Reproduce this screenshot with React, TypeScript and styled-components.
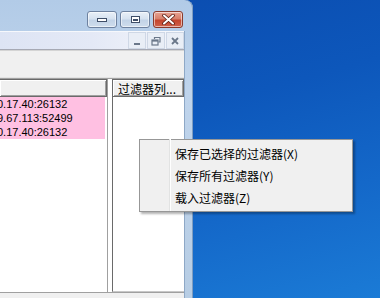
import React from 'react';
import styled, { createGlobalStyle } from 'styled-components';

const GlobalStyle = createGlobalStyle`
  html, body {
    margin: 0;
    padding: 0;
    width: 380px;
    height: 298px;
    overflow: hidden;
  }
  body {
    font-family: "Liberation Sans", Arial, "Noto Sans CJK SC", sans-serif;
  }
`;

const Screen = styled.div`
  position: relative;
  width: 380px;
  height: 298px;
  display: flex;
  background: linear-gradient(165deg, #0a4aad 0%, #0d57bb 40%, #1468c9 70%, #1b7bd6 100%);
  overflow: hidden;
`;

const Window = styled.div`
  width: 193px;
  height: 298px;
  display: flex;
  flex-direction: column;
  background: linear-gradient(180deg, #b2cbe7 0%, #bfd4ec 30%, #b7cde4 100%);
  border-top-right-radius: 8px;
  box-shadow: inset -1px 0 0 #7f9dc0;
`;

const TitleBar = styled.div`
  height: 31px;
  flex: none;
  display: flex;
  justify-content: flex-end;
  align-items: flex-start;
  gap: 3px;
  padding: 11px 10px 0 0;
  box-sizing: border-box;
`;

const CaptionButton = styled.div<{ $close?: boolean }>`
  width: 30px;
  height: 17px;
  box-sizing: border-box;
  border: 1px solid ${p => (p.$close ? '#8a3a2c' : '#6e82a0')};
  border-radius: 3px;
  display: flex;
  align-items: center;
  justify-content: center;
  background: ${p =>
    p.$close
      ? 'linear-gradient(180deg, #e7a393 0%, #d8806b 45%, #c4452d 55%, #d0614a 100%)'
      : 'linear-gradient(180deg, #e9f0f8 0%, #d6e2f0 45%, #c2d3e7 55%, #cfdded 100%)'};
  box-shadow: inset 0 0 0 1px rgba(255, 255, 255, 0.55);
`;

const Client = styled.div`
  flex: 1;
  display: flex;
  flex-direction: column;
  width: 185px;
  background: #f0f0f0;
  border-right: 1px solid #8ea8c6;
  box-sizing: border-box;
`;

const MdiBar = styled.div`
  height: 19px;
  flex: none;
  display: flex;
  justify-content: flex-end;
  align-items: stretch;
  gap: 1px;
  background: linear-gradient(90deg, #dde4f4 0%, #e4e9f6 50%, #f4f6fb 100%);
  border-top: 1px solid #f6f8fc;
  border-bottom: 1px solid #a6a9b4;
  box-sizing: border-box;
`;

const MdiButton = styled.div`
  width: 18px;
  display: flex;
  align-items: center;
  justify-content: center;
  background: #e9eef6;
  border: 1px solid #cfd8e6;
  box-sizing: border-box;
`;

const ToolBar = styled.div`
  height: 29px;
  flex: none;
  background: #f0f0f0;
  border-top: 1px solid #d4d4d4;
  border-bottom: 1px solid #a0a0a0;
  box-shadow: inset 0 -1px 0 #e3e3e3;
  box-sizing: border-box;
`;

const Panes = styled.div`
  flex: 1;
  display: flex;
  background: #f0f0f0;
`;

const ListPane = styled.div`
  width: 108px;
  flex: none;
  display: flex;
  flex-direction: column;
  background: #ffffff;
  border-right: 1px solid #a0a0a0;
  box-sizing: border-box;
  overflow: hidden;
`;

const ColumnHeader = styled.div<{ $indent?: number }>`
  height: 18px;
  flex: none;
  display: flex;
  align-items: center;
  background: #f0f0f0;
  border-top: 1px solid #6a6a6a;
  border-bottom: 1px solid #6a6a6a;
  border-right: 1px solid #6a6a6a;
  box-shadow: inset 1px 1px 0 #ffffff, inset -1px -1px 0 #a0a0a0;
  box-sizing: border-box;
  padding-left: ${p => p.$indent ?? 0}px;
  font-family: "Noto Sans CJK SC", sans-serif;
  font-size: 12px;
  color: #000;
  white-space: nowrap;
`;

const Row = styled.div`
  height: 14px;
  flex: none;
  display: flex;
  align-items: center;
  background: #ffc0e2;
  margin-right: 2px;
  font-family: "Liberation Sans", Arial, sans-serif;
  font-size: 11px;
  color: #000;
  white-space: nowrap;
`;

const RowText = styled.span`
  margin-left: -3px;
`;

const Splitter = styled.div`
  width: 4px;
  flex: none;
  background: #ffffff;
`;

const FilterPane = styled.div`
  flex: 1;
  display: flex;
  flex-direction: column;
  background: #ffffff;
  border-left: 1px solid #6a6a6a;
  border-bottom: 1px solid #c8c8c8;
`;

const StatusBar = styled.div`
  height: 5px;
  flex: none;
  background: #f0f0f0;
  border-top: 1px solid #a0a0a0;
`;

const ContextMenu = styled.div`
  position: absolute;
  left: 139px;
  top: 139px;
  width: 214px;
  padding: 2px 2px 3px 2px;
  box-sizing: border-box;
  background: #f0f0f0;
  border: 1px solid #979797;
  box-shadow: 2px 2px 2px rgba(0, 0, 0, 0.3);
  display: flex;
  flex-direction: column;
`;

const MenuItem = styled.div`
  position: relative;
  height: 22px;
  display: flex;
  align-items: center;
  padding-left: 33px;
  font-family: "Noto Sans CJK SC", sans-serif;
  font-size: 12px;
  color: #000;
  white-space: nowrap;
  &::before {
    content: '';
    position: absolute;
    left: 27px;
    top: -3px;
    bottom: -3px;
    width: 1px;
    background: #e2e3e3;
    box-shadow: 1px 0 0 #ffffff;
  }
`;

const MinGlyph = () => (
  <svg width="12" height="6" viewBox="0 0 12 6">
    <rect x="1.5" y="1.5" width="9" height="3" fill="#ffffff" stroke="#3e4e68" strokeWidth="1" />
  </svg>
);

const MaxGlyph = () => (
  <svg width="11" height="9" viewBox="0 0 11 9">
    <rect x="1" y="1" width="9" height="7" fill="#3e4e68" />
    <rect x="2" y="2" width="7" height="5" fill="#ffffff" />
    <rect x="3" y="4" width="5" height="2" fill="#3e4e68" />
  </svg>
);

const CloseGlyph = () => (
  <svg width="13" height="11" viewBox="0 0 13 11">
    <path d="M2 1.5 L11 9.5 M11 1.5 L2 9.5" stroke="#5a1c12" strokeWidth="3.6" strokeLinecap="round" />
    <path d="M2 1.5 L11 9.5 M11 1.5 L2 9.5" stroke="#ffffff" strokeWidth="2" strokeLinecap="round" />
  </svg>
);

const MdiMin = () => (
  <svg width="10" height="10" viewBox="0 0 10 10">
    <rect x="2" y="7" width="6" height="2" fill="#6a7789" />
  </svg>
);

const MdiRestore = () => (
  <svg width="10" height="10" viewBox="0 0 10 10">
    <path d="M3.5 3 V1.5 H9 V6 H7.5" fill="none" stroke="#6a7789" strokeWidth="1.2" />
    <rect x="1" y="4" width="6" height="5" fill="none" stroke="#6a7789" strokeWidth="1.2" />
    <rect x="1" y="4" width="6" height="1.6" fill="#6a7789" />
  </svg>
);

const MdiClose = () => (
  <svg width="10" height="10" viewBox="0 0 10 10">
    <path d="M2 2 L8 8 M8 2 L2 8" stroke="#6a7789" strokeWidth="1.8" />
  </svg>
);

const rows = ['0.17.40:26132', '9.67.113:52499', '0.17.40:26132'];

const menuItems = ['保存已选择的过滤器(X)', '保存所有过滤器(Y)', '载入过滤器(Z)'];

const App = () => {
  return (
    <Screen>
      <GlobalStyle />
      <Window>
        <TitleBar>
          <CaptionButton><MinGlyph /></CaptionButton>
          <CaptionButton><MaxGlyph /></CaptionButton>
          <CaptionButton $close><CloseGlyph /></CaptionButton>
        </TitleBar>
        <Client>
          <MdiBar>
            <MdiButton><MdiMin /></MdiButton>
            <MdiButton><MdiRestore /></MdiButton>
            <MdiButton><MdiClose /></MdiButton>
          </MdiBar>
          <ToolBar />
          <Panes>
            <ListPane>
              <ColumnHeader />
              {rows.map((r, i) => (
                <Row key={i}>
                  <RowText>{r}</RowText>
                </Row>
              ))}
            </ListPane>
            <Splitter />
            <FilterPane>
              <ColumnHeader $indent={5}>过滤器列...</ColumnHeader>
            </FilterPane>
          </Panes>
          <StatusBar />
        </Client>
      </Window>
      <ContextMenu>
        {menuItems.map(m => (
          <MenuItem key={m}>{m}</MenuItem>
        ))}
      </ContextMenu>
    </Screen>
  );
};

export default App;
